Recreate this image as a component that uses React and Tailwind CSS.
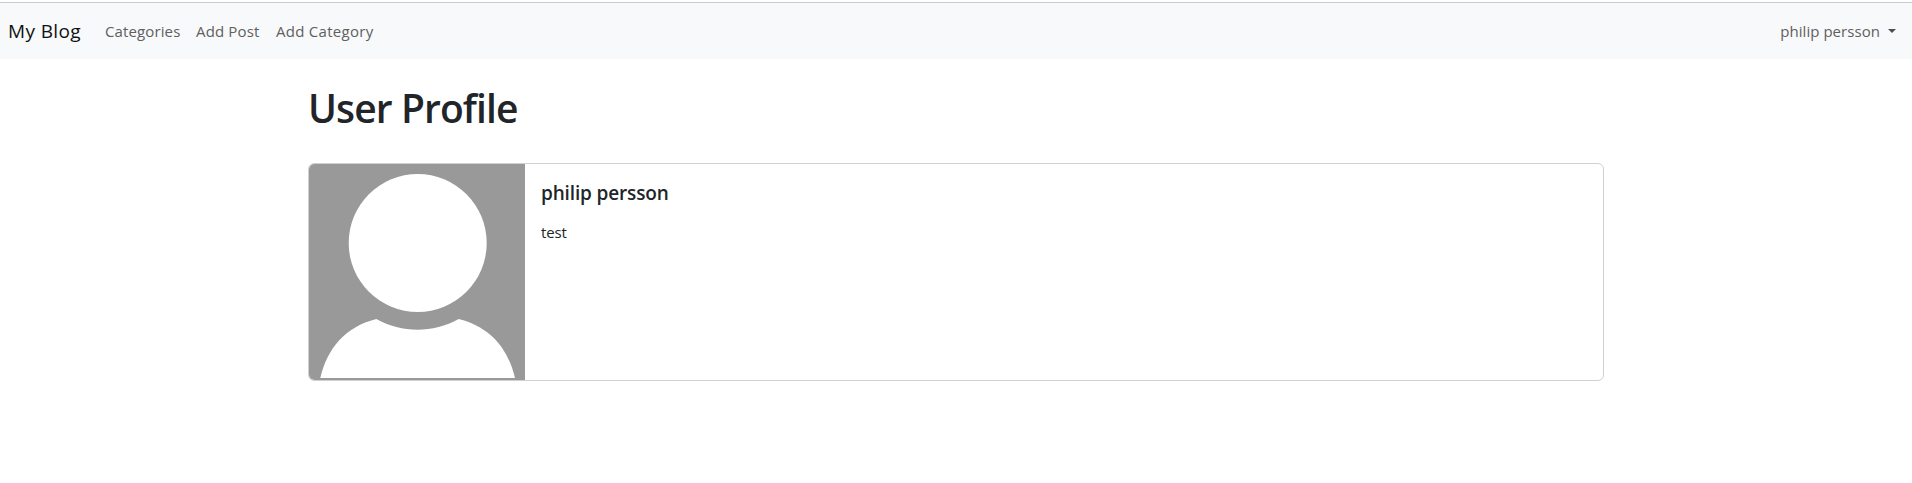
const links = [
  { label: "Categories", className: "w-[91px] tracking-[0.12px]" },
  { label: "Add Post", className: "w-[80px] tracking-[0.15px]" },
  { label: "Add Category", className: "tracking-[0.28px]" },
];

function Navbar() {
  return (
    <nav className="flex h-[59px] items-center border-t-2 border-white bg-[#f8f9fa] text-[15px] text-[#5e5f60] shadow-[inset_0_1px_0_#c8cccb]">
      <a className="w-[97px] shrink-0 pl-2 text-[19px] leading-[30px] tracking-[0.38px] text-[#101112]">My Blog</a>
      <div className="flex pl-2">
        {links.map((link) => (
          <a key={link.label} className={`whitespace-nowrap leading-6 ${link.className}`}>{link.label}</a>
        ))}
      </div>
      <button className="ml-auto mr-4 flex items-center gap-2 leading-6">
        <span className="tracking-[0.05px]">philip persson</span>
        <span className="h-0 w-0 border-x-[4.8px] border-t-[4.8px] border-x-transparent border-t-[#4d4e4f]" />
      </button>
    </nav>
  );
}

function Avatar() {
  return (
    <svg className="h-[216px] w-[216px] shrink-0 rounded-l-[5px]" viewBox="0 0 216 216">
      <rect width="216" height="216" fill="#999" />
      <circle cx="108.7" cy="79" r="69" fill="#fff" />
      <path d="M11.3 214C18.5 184 36 163 67.3 155C93 169.3 124 169.3 149.7 155C181 163 199 184 206 214Z" fill="#fff" />
    </svg>
  );
}

export default function App() {
  return (
    <div className="min-h-[483px] bg-white font-['Open_Sans','Noto_Sans',sans-serif] text-[#212529]">
      <Navbar />
      <main className="mx-auto w-[1296px] pt-6">
        <h1 className="h-20 text-[39px] font-[550] leading-[50px] tracking-[-0.9px]">User Profile</h1>
        <section className="flex h-[218px] overflow-hidden rounded-md border border-[#d0d0d0]">
          <Avatar />
          <div className="px-4 pt-[17px]">
            <h5 className="mb-2 text-[19px] font-[550] leading-6 tracking-[-0.15px]">philip persson</h5>
            <p className="pt-[7px] text-[15px] leading-6 tracking-[-0.15px]">test</p>
          </div>
        </section>
      </main>
    </div>
  );
}
